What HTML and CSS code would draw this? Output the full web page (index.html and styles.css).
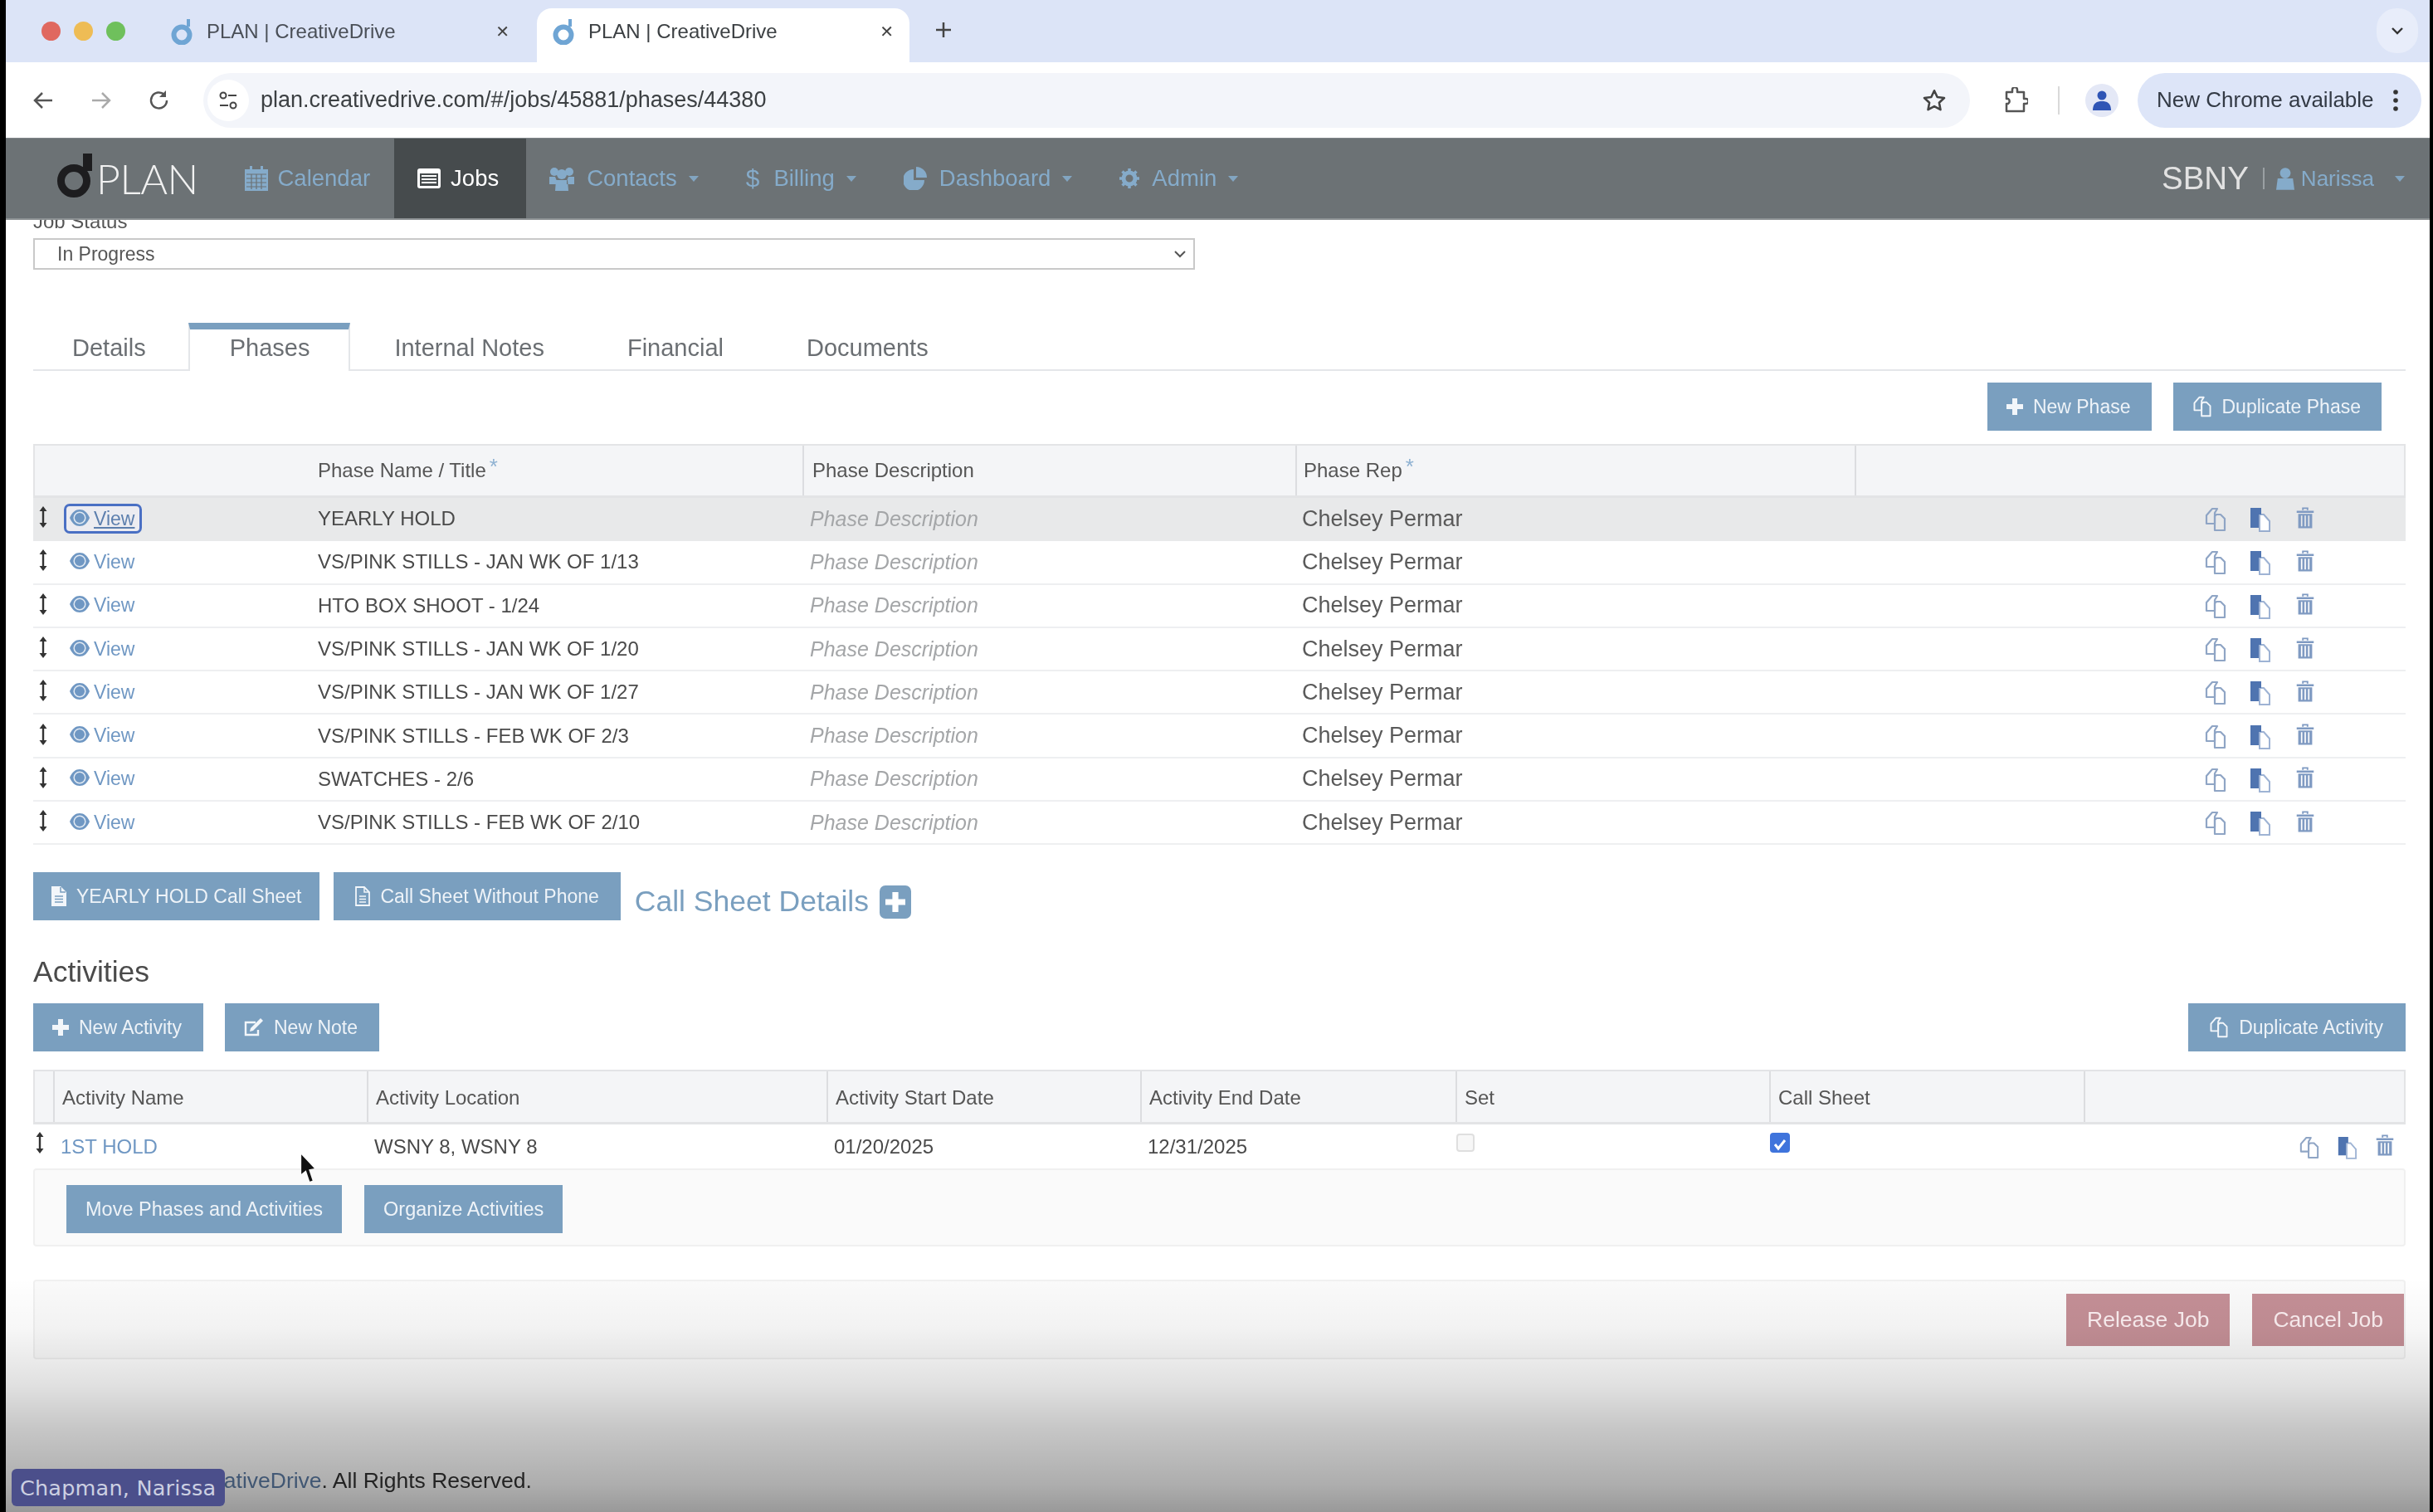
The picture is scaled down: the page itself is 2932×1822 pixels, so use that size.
FILE: index.html
```html
<!DOCTYPE html>
<html lang="en">
<head>
<meta charset="utf-8">
<title>PLAN | CreativeDrive</title>
<link rel="stylesheet" href="styles.css">
</head>
<body>
<svg class="defs" width="0" height="0" aria-hidden="true">
  <symbol id="fav" viewBox="0 0 28 32"><circle cx="13" cy="20" r="9.500" fill="none" stroke="currentColor" stroke-width="6"/><path d="M19 1l4 0 0 9-4 1z" fill="currentColor"/></symbol>
  <symbol id="eye" viewBox="0 0 24 20"><path d="M0 10C3 3 7 0 12 0s9 3 12 10c-3 7-7 10-12 10S3 17 0 10z" fill="currentColor"/><circle cx="12" cy="10" r="6.800" fill="none" stroke="#fff" stroke-width="1.500" opacity=".8"/></symbol>
  <symbol id="drag" viewBox="0 0 10 26"><path d="M5 0l4.500 6H6.200v14h3.300L5 26 .5 20h3.300V6H.5z" fill="currentColor"/></symbol>
  <symbol id="copy" viewBox="0 0 26 30"><path d="M9 2h6l-3 5v13H2V10z" fill="none" stroke="currentColor" stroke-width="2.200" stroke-linejoin="round"/><path d="M14 9h5l5 5v14H12V11z" fill="none" stroke="currentColor" stroke-width="2.200" stroke-linejoin="round"/></symbol>
  <symbol id="paste" viewBox="0 0 26 30"><path d="M2 1h13v8h-3v16H2z" fill="currentColor"/><path d="M13 9h5l7 8v12H13z" fill="#fff" stroke="currentColor" stroke-opacity=".55" stroke-width="2"/></symbol>
  <symbol id="trash" viewBox="0 0 22 30"><path d="M0 6h22v2.600H0zM7 5V1.500h8V5h-2V3.400H9V5z" fill="currentColor"/><path d="M2 10h18v18.500H2zM5.500 12v14h1.800V12zm4.600 0v14h1.800V12zm4.600 0v14h1.800V12z" fill="currentColor" fill-rule="evenodd"/></symbol>
  <symbol id="plus" viewBox="0 0 20 20"><path d="M7 0h6v7h7v6h-7v7H7v-7H0V7h7z" fill="currentColor"/></symbol>
  <symbol id="doc" viewBox="0 0 18 24"><path d="M0 0h11l7 7v17H0z" fill="currentColor"/><path d="M11 1v6h6M4 12h10M4 15.500h10M4 19h10" stroke="#7a9fbf" stroke-width="1.500" fill="none"/></symbol>
  <symbol id="doco" viewBox="0 0 18 24"><path d="M1 1h10l6 6v16H1z" fill="none" stroke="currentColor" stroke-width="1.800"/><path d="M11 1v6h6M5 12h8M5 15.500h8M5 19h8" stroke="currentColor" stroke-width="1.500" fill="none"/></symbol>
  <symbol id="edit" viewBox="0 0 24 24"><path d="M17 15v6H2V6h12" fill="none" stroke="currentColor" stroke-width="2.400"/><path d="M20 1l3 3L11 16l-4 1 1-4z" fill="currentColor"/></symbol>
  <symbol id="cal" viewBox="0 0 28 30"><path d="M0 4h28v26H0z" fill="currentColor"/><path d="M6 0h3v7H6zM19 0h3v7h-3z" fill="currentColor"/><path d="M2 10h24M2 15h24M2 20h24M2 25h24M8 10v18M14 10v18M20 10v18" stroke="#6c7275" stroke-width="1.200"/></symbol>
  <symbol id="list" viewBox="0 0 28 24"><rect width="28" height="24" rx="3" fill="currentColor"/><path d="M3 6h22v15H3z" fill="#464b4d"/><path d="M5 9h18M5 13h18M5 17h18" stroke="#fff" stroke-width="2"/></symbol>
  <symbol id="users" viewBox="0 0 30 30"><circle cx="6" cy="7" r="5" fill="currentColor"/><circle cx="24" cy="7" r="5" fill="currentColor"/><circle cx="15" cy="10" r="6" fill="currentColor"/><path d="M0 13h7l2 5v4H0zM30 13h-7l-2 5v4h9zM8 17h14l1 13H7z" fill="currentColor"/></symbol>
  <symbol id="pie" viewBox="0 0 28 28"><path d="M12 3v13h13a13 13 0 1 1-13-13z" fill="currentColor"/><path d="M15 0a13 13 0 0 1 13 13H15z" fill="currentColor"/></symbol>
  <symbol id="gear" viewBox="0 0 24 24"><circle cx="12" cy="12" r="7" fill="none" stroke="currentColor" stroke-width="5"/><path d="M12 0v24M0 12h24M3.500 3.500l17 17M20.500 3.500l-17 17" stroke="currentColor" stroke-width="3.500" stroke-dasharray="4 16"/></symbol>
  <symbol id="user" viewBox="0 0 24 30"><circle cx="12" cy="8" r="7" fill="currentColor"/><path d="M2 15h20l2 15H0z" fill="currentColor"/></symbol>
</svg>

<div class="window">
  <header class="tabstrip">
    <div class="lights"><i class="light red"></i><i class="light amber"></i><i class="light green"></i></div>
    <div class="btab">
      <svg class="fav"><use href="#fav"/></svg><span class="btab-title">PLAN | CreativeDrive</span><span class="btab-x">✕</span>
    </div>
    <div class="btab active">
      <svg class="fav"><use href="#fav"/></svg><span class="btab-title">PLAN | CreativeDrive</span><span class="btab-x">✕</span>
    </div>
    <svg class="newtab" viewBox="0 0 20 20"><path d="M10 1v18M1 10h18" stroke="#444" stroke-width="2.500"/></svg>
    <div class="tabmenu"><svg viewBox="0 0 16 10" width="16" height="10"><path d="M2 2l6 6 6-6" fill="none" stroke="#333" stroke-width="2.400"/></svg></div>
  </header>

  <div class="toolbar">
    <svg class="tool back" viewBox="0 0 26 26"><path d="M24 13H4M12 4l-9 9 9 9" fill="none" stroke="#555" stroke-width="2.500"/></svg>
    <svg class="tool fwd" viewBox="0 0 26 26"><path d="M2 13h20M14 4l9 9-9 9" fill="none" stroke="#aaa" stroke-width="2.500"/></svg>
    <svg class="tool reload" viewBox="0 0 26 26"><path d="M22 13a9.500 9.500 0 1 1-3-7" fill="none" stroke="#555" stroke-width="2.500"/><path d="M21 1v8h-8z" fill="#555"/></svg>
    <div class="omnibox">
      <span class="tune"><svg viewBox="0 0 24 24" width="24" height="24"><circle cx="6" cy="6" r="3.500" fill="none" stroke="#444" stroke-width="2"/><path d="M12 6h10M2 18h10" stroke="#444" stroke-width="2.200"/><circle cx="18" cy="18" r="3.500" fill="none" stroke="#444" stroke-width="2"/></svg></span>
      <span class="url">plan.creativedrive.com/#/jobs/45881/phases/44380</span>
      <svg class="star" viewBox="0 0 28 28"><path d="M14 3l3.400 7.200 7.800 1-5.700 5.400 1.500 7.800-7-3.800-7 3.800 1.500-7.800-5.700-5.400 7.800-1z" fill="none" stroke="#444" stroke-width="2.400" stroke-linejoin="round"/></svg>
    </div>
    <svg class="ext" viewBox="0 0 30 32"><path d="M4 6h7V3a3 3 0 0 1 6 0v3h8v8h2.500a3 3 0 0 1 0 6H25v9H4v-9h2a3.500 3.500 0 0 0 0-6H4z" fill="none" stroke="#555" stroke-width="2.500" stroke-linejoin="round"/></svg>
    <span class="tooldiv"></span>
    <span class="avatar"><svg viewBox="0 0 24 26" width="24" height="26"><circle cx="12" cy="7" r="5.500" fill="#2f55b5"/><path d="M1 25c0-9 5-11 11-11s11 2 11 11z" fill="#2f55b5"/></svg></span>
    <div class="update"><span>New Chrome available</span><svg viewBox="0 0 6 26" width="6" height="26"><circle cx="3" cy="3" r="2.800" fill="#333"/><circle cx="3" cy="13" r="2.800" fill="#333"/><circle cx="3" cy="23" r="2.800" fill="#333"/></svg></div>
  </div>

  <nav class="navbar">
    <div class="brand"><svg class="brand-mark" viewBox="0 0 44 54"><circle cx="20" cy="33" r="15.500" fill="none" stroke="#1d1d1f" stroke-width="9"/><path d="M31 0h11v21H31z" fill="#1d1d1f"/></svg><span class="brand-name">PLAN</span></div>
    <a class="nav-item"><svg class="nav-ic cal"><use href="#cal"/></svg>Calendar</a>
    <a class="nav-item on"><svg class="nav-ic list"><use href="#list"/></svg>Jobs</a>
    <a class="nav-item"><svg class="nav-ic users"><use href="#users"/></svg>Contacts<i class="caret"></i></a>
    <a class="nav-item"><span class="nav-dollar">$</span>Billing<i class="caret"></i></a>
    <a class="nav-item"><svg class="nav-ic pie"><use href="#pie"/></svg>Dashboard<i class="caret"></i></a>
    <a class="nav-item"><svg class="nav-ic gear"><use href="#gear"/></svg>Admin<i class="caret"></i></a>
    <div class="nav-right"><span class="org">SBNY</span><span class="org-sep"></span><svg class="nav-user"><use href="#user"/></svg><span class="nav-name">Narissa</span><i class="caret far"></i></div>
  </nav>

  <main class="content">
    <div class="status-label">Job Status</div>
    <div class="select"><span>In Progress</span><svg viewBox="0 0 16 10" width="16" height="10"><path d="M2 2l6 6 6-6" fill="none" stroke="#555" stroke-width="2"/></svg></div>

    <div class="tabs">
      <a class="tab first">Details</a>
      <a class="tab active">Phases</a>
      <a class="tab">Internal Notes</a>
      <a class="tab">Financial</a>
      <a class="tab">Documents</a>
    </div>

    <div class="actions-right">
      <a class="btn"><svg class="bi plus"><use href="#plus"/></svg>New Phase</a>
      <a class="btn"><svg class="bi cp"><use href="#copy"/></svg>Duplicate Phase</a>
    </div>

    <div class="ptable">
      <div class="prow phead"><div></div><div class="c-name">Phase Name / Title<sup class="req">*</sup></div><div class="c-desc">Phase Description</div><div class="c-rep">Phase Rep<sup class="req">*</sup></div><div></div></div>

      <div class="prow sel"><div class="c-handle"><svg class="drag"><use href="#drag"/></svg><a class="view focus"><svg class="eye"><use href="#eye"/></svg>View</a></div><div class="pname">YEARLY HOLD</div><div class="pdesc">Phase Description</div><div class="prep">Chelsey Permar</div><div class="pact"><svg class="a cp"><use href="#copy"/></svg><svg class="a ps"><use href="#paste"/></svg><svg class="a tr"><use href="#trash"/></svg></div></div>
      <div class="prow"><div class="c-handle"><svg class="drag"><use href="#drag"/></svg><a class="view"><svg class="eye"><use href="#eye"/></svg>View</a></div><div class="pname">VS/PINK STILLS - JAN WK OF 1/13</div><div class="pdesc">Phase Description</div><div class="prep">Chelsey Permar</div><div class="pact"><svg class="a cp"><use href="#copy"/></svg><svg class="a ps"><use href="#paste"/></svg><svg class="a tr"><use href="#trash"/></svg></div></div>
      <div class="prow"><div class="c-handle"><svg class="drag"><use href="#drag"/></svg><a class="view"><svg class="eye"><use href="#eye"/></svg>View</a></div><div class="pname">HTO BOX SHOOT - 1/24</div><div class="pdesc">Phase Description</div><div class="prep">Chelsey Permar</div><div class="pact"><svg class="a cp"><use href="#copy"/></svg><svg class="a ps"><use href="#paste"/></svg><svg class="a tr"><use href="#trash"/></svg></div></div>
      <div class="prow"><div class="c-handle"><svg class="drag"><use href="#drag"/></svg><a class="view"><svg class="eye"><use href="#eye"/></svg>View</a></div><div class="pname">VS/PINK STILLS - JAN WK OF 1/20</div><div class="pdesc">Phase Description</div><div class="prep">Chelsey Permar</div><div class="pact"><svg class="a cp"><use href="#copy"/></svg><svg class="a ps"><use href="#paste"/></svg><svg class="a tr"><use href="#trash"/></svg></div></div>
      <div class="prow"><div class="c-handle"><svg class="drag"><use href="#drag"/></svg><a class="view"><svg class="eye"><use href="#eye"/></svg>View</a></div><div class="pname">VS/PINK STILLS - JAN WK OF 1/27</div><div class="pdesc">Phase Description</div><div class="prep">Chelsey Permar</div><div class="pact"><svg class="a cp"><use href="#copy"/></svg><svg class="a ps"><use href="#paste"/></svg><svg class="a tr"><use href="#trash"/></svg></div></div>
      <div class="prow"><div class="c-handle"><svg class="drag"><use href="#drag"/></svg><a class="view"><svg class="eye"><use href="#eye"/></svg>View</a></div><div class="pname">VS/PINK STILLS - FEB WK OF 2/3</div><div class="pdesc">Phase Description</div><div class="prep">Chelsey Permar</div><div class="pact"><svg class="a cp"><use href="#copy"/></svg><svg class="a ps"><use href="#paste"/></svg><svg class="a tr"><use href="#trash"/></svg></div></div>
      <div class="prow"><div class="c-handle"><svg class="drag"><use href="#drag"/></svg><a class="view"><svg class="eye"><use href="#eye"/></svg>View</a></div><div class="pname">SWATCHES - 2/6</div><div class="pdesc">Phase Description</div><div class="prep">Chelsey Permar</div><div class="pact"><svg class="a cp"><use href="#copy"/></svg><svg class="a ps"><use href="#paste"/></svg><svg class="a tr"><use href="#trash"/></svg></div></div>
      <div class="prow"><div class="c-handle"><svg class="drag"><use href="#drag"/></svg><a class="view"><svg class="eye"><use href="#eye"/></svg>View</a></div><div class="pname">VS/PINK STILLS - FEB WK OF 2/10</div><div class="pdesc">Phase Description</div><div class="prep">Chelsey Permar</div><div class="pact"><svg class="a cp"><use href="#copy"/></svg><svg class="a ps"><use href="#paste"/></svg><svg class="a tr"><use href="#trash"/></svg></div></div>
    </div>

    <div class="sheet-row">
      <a class="btn sheet-a"><svg class="bi doc"><use href="#doc"/></svg>YEARLY HOLD Call Sheet</a>
      <a class="btn sheet-b"><svg class="bi doc"><use href="#doco"/></svg>Call Sheet Without Phone</a>
      <span class="sheet-title">Call Sheet Details</span>
      <span class="sheet-plus"><svg viewBox="0 0 20 20" width="24" height="24"><path d="M7 0h6v7h7v6h-7v7H7v-7H0V7h7z" fill="#fff"/></svg></span>
    </div>

    <h2 class="h-act">Activities</h2>

    <div class="act-bar">
      <a class="btn"><svg class="bi plus"><use href="#plus"/></svg>New Activity</a>
      <a class="btn"><svg class="bi ed"><use href="#edit"/></svg>New Note</a>
      <a class="btn dup"><svg class="bi cp"><use href="#copy"/></svg>Duplicate Activity</a>
    </div>

    <div class="atable">
      <div class="arow ahead"><div></div><div>Activity Name</div><div>Activity Location</div><div>Activity Start Date</div><div>Activity End Date</div><div>Set</div><div>Call Sheet</div><div></div></div>
      <div class="arow abody">
        <div class="a-handle"><svg class="drag"><use href="#drag"/></svg></div>
        <div><a class="alink">1ST HOLD</a></div>
        <div>WSNY 8, WSNY 8</div>
        <div>01/20/2025</div>
        <div>12/31/2025</div>
        <div><span class="check"></span></div>
        <div><span class="check on"><svg viewBox="0 0 20 20" width="20" height="20"><path d="M4 10l4 5 8-10" fill="none" stroke="#fff" stroke-width="3"/></svg></span></div>
        <div class="aact"><svg class="a cp"><use href="#copy"/></svg><svg class="a ps"><use href="#paste"/></svg><svg class="a tr"><use href="#trash"/></svg></div>
      </div>
    </div>

    <div class="well">
      <a class="btn">Move Phases and Activities</a>
      <a class="btn">Organize Activities</a>
    </div>

    <div class="job-foot">
      <a class="btn danger">Release Job</a>
      <a class="btn danger">Cancel Job</a>
    </div>

    <footer class="copyright">Copyright 2025 <a class="copy-link">CreativeDrive</a>. All Rights Reserved.</footer>
  </main>
</div>

<div class="vignette"></div>
<svg class="cursor" viewBox="0 0 16 32"><path d="M1 1l0 21 5-4 4 12 3-1-4-12 6-1z" fill="#111"/></svg>
<div class="caption">Chapman, Narissa</div>
</body>
</html>
```

FILE: styles.css
```css
* { box-sizing: border-box; }
html, body { margin: 0; padding: 0; }
body {
  width: 2932px; height: 1822px; overflow: hidden; position: relative;
  background: #000; font-family: "Liberation Sans", Arial, sans-serif; color: #4a4a4a;
}
.defs { position: absolute; }
a { color: inherit; text-decoration: none; }

.window {
  margin-left: 7px; width: 2921px; height: 1822px; background: #fff;
  display: flex; flex-direction: column; overflow: hidden; filter: blur(.6px);
}

/* browser tab strip */
.tabstrip { height: 75px; flex: none; background: #dce4f7; display: flex; align-items: flex-start; position: relative; }
.lights { display: flex; gap: 16px; padding: 26px 0 0 43px; width: 191px; flex: none; }
.light { width: 23px; height: 23px; border-radius: 50%; display: block; }
.red { background: #e0685f; }
.amber { background: #eebc55; }
.green { background: #6fc05c; }
.btab { width: 449px; height: 65px; margin-top: 10px; display: flex; align-items: center; padding: 0 33px 10px 8px; flex: none; color: #4a4f57; }
.btab.active { background: #fff; border-radius: 18px 18px 0 0; color: #3c4043; padding: 0 19px 10px 19px; }
.fav { width: 28px; height: 32px; color: #6fa5d4; flex: none; margin-right: 15px; }
.btab-title { font-size: 24px; flex: 1; }
.btab-x { font-size: 20px; color: #444; font-family: "DejaVu Sans", sans-serif; }
.newtab { width: 20px; height: 20px; margin: 26px 0 0 31px; flex: none; }
.tabmenu { margin: 10px 14px 0 auto; width: 50px; height: 54px; border-radius: 24px; background: #e8edfa; display: flex; align-items: center; justify-content: center; }

/* browser toolbar */
.toolbar { height: 91px; flex: none; background: #fff; display: flex; align-items: center; padding: 0 11px 0 32px; }
.tool { width: 26px; height: 26px; flex: none; margin-right: 44px; }
.reload { margin-right: 40px; }
.omnibox { width: 2129px; height: 66px; background: #f3f5fa; border-radius: 33px; display: flex; align-items: center; flex: none; }
.tune { width: 50px; height: 50px; margin-left: 5px; border-radius: 50%; background: #fff; display: flex; align-items: center; justify-content: center; flex: none; }
.url { font-size: 27px; margin-left: 14px; color: #3c4043; flex: 1; }
.star { width: 30px; height: 30px; margin-right: 28px; flex: none; }
.ext { width: 30px; height: 32px; margin-left: 40px; flex: none; }
.tooldiv { width: 2px; height: 34px; background: #d9d9d9; margin-left: 36px; flex: none; }
.avatar { width: 40px; height: 40px; border-radius: 50%; background: #e4e8f6; margin-left: 31px; flex: none; display: flex; align-items: center; justify-content: center; }
.update { margin-left: 23px; height: 66px; width: 342px; flex: none; border-radius: 33px; background: #dde5f8; display: flex; align-items: center; padding: 0 28px 0 23px; justify-content: space-between; font-size: 26px; color: #333a45; }

/* app navbar */
.navbar { height: 99px; flex: none; background: #6c7275; display: flex; align-items: stretch; border-bottom: 2px solid #8d9294; border-top: 1px solid #80868a; font-size: 27.500px; color: #85abca; }
.brand { width: 259px; flex: none; display: flex; align-items: center; padding-left: 62px; }
.brand-mark { width: 44px; height: 54px; margin-top: -6px; flex: none; }
.brand-name { font-family: Lato, "Liberation Sans", sans-serif; font-weight: 300; font-size: 50px; color: #f1f1f1; margin-left: 3px; letter-spacing: -.5px; }
.nav-item { display: flex; align-items: center; padding: 0 28.500px; }
.nav-item.on { background: #464b4d; color: #fff; padding-right: 32.500px; }
.nav-ic { width: 28px; height: 28px; margin-right: 15px; flex: none; }
.nav-ic.cal { height: 30px; margin-right: 12px; }
.nav-ic.list { height: 24px; margin-right: 12px; }
.nav-ic.users { width: 30px; height: 30px; }
.nav-ic.gear { width: 24px; height: 24px; }
.nav-dollar { font-size: 30px; margin-right: 17px; }
.caret { width: 0; height: 0; border-left: 6px solid transparent; border-right: 6px solid transparent; border-top: 7px solid currentColor; margin-left: 14px; opacity: .9; }
.nav-right { margin-left: auto; display: flex; align-items: center; padding-right: 30px; }
.org { font-size: 38.500px; color: #e2e2e2; }
.org-sep { width: 2px; height: 26px; background: #9aa0a3; margin: 0 14px 0 17px; }
.nav-user { width: 22px; height: 30px; margin-right: 8px; }
.nav-name { font-size: 26px; }
.caret.far { margin-left: 25px; }

/* page */
.content { flex: 1; min-height: 0; overflow: hidden; padding: 0 29px 0 33px; display: flex; flex-direction: column; color: #4a4a4a; }
.status-label { font-size: 24px; line-height: 28px; margin-top: -12px; height: 28px; flex: none; color: #555; }
.select { width: 1400px; height: 38px; margin-top: 6px; flex: none; border: 2px solid #c9c9c9; padding: 0 8px 0 27px; display: flex; align-items: center; justify-content: space-between; font-size: 23px; color: #555; }

.tabs { margin-top: 64px; height: 58px; flex: none; display: flex; border-bottom: 2px solid #e4e6e9; font-size: 29px; color: #6b6f73; }
.tab { padding: 2px 47px 0; display: flex; align-items: center; height: 58px; margin-right: 6px; }
.tab.first { margin-right: 4px; }
.tab.active { padding: 0 47px 6px 48px; border: 2px solid #e4e6e9; border-top: 8px solid #7a9fbf; border-bottom: 0; background: #fff; }

.btn { display: inline-flex; align-items: center; height: 58px; padding: 0 25px 0 23px; background: #7a9fbf; color: #eef3f8; font-size: 23px; flex: none; }
.bi { width: 20px; height: 20px; margin-right: 12px; flex: none; color: #f2f6fa; }
.bi.cp { width: 24px; height: 26px; }
.bi.doc { width: 18px; height: 24px; }
.bi.ed { width: 24px; height: 24px; }

.actions-right { margin-top: 14px; padding-right: 29px; display: flex; justify-content: flex-end; gap: 26px; flex: none; }

.ptable { margin-top: 16px; flex: none; }
.prow { display: grid; grid-template-columns: 343px 584px 594px 674px 1fr; height: 52.300px; align-items: center; border-bottom: 2px solid #eeeff1; }
.phead { height: 65px; grid-template-columns: 341px 584px 594px 674px 1fr; background: #f4f5f7; border: 2px solid #e3e4e6; border-bottom-width: 3px; font-size: 24px; color: #555; align-items: stretch; }
.phead > div { display: flex; align-items: center; }
.phead .c-desc { border-left: 2px solid #dcdde0; padding-left: 10px; }
.phead .c-rep { border-left: 2px solid #dcdde0; padding-left: 8px; }
.phead > div:last-child { border-left: 2px solid #dcdde0; }
.req { color: #8fb2d2; font-size: 26px; margin: -10px 0 0 4px; line-height: 1; }
.prow.sel { background: #e8e9ea; border-bottom-color: #e8e9ea; }
.c-handle { display: flex; align-items: center; padding-left: 7px; }
.drag { width: 10px; height: 26px; color: #333; flex: none; margin-top: -4px; }
.view { display: inline-flex; align-items: center; margin-left: 20px; font-size: 23px; color: #6f97c3; padding: 0 6px 0 4px; height: 36px; border: 3px solid transparent; }
.view.focus { color: #5d7fae; text-decoration: underline; border-color: #4a70c4; border-radius: 7px; background: #ececf1; }
.eye { width: 24px; height: 20px; color: #6f97c3; margin-right: 5px; flex: none; margin-top: -3px; }
.pname { font-size: 24px; color: #4a4a4a; }
.pdesc { font-size: 25px; font-style: italic; color: #a4a6a8; padding-left: 9px; }
.prep { font-size: 27px; color: #5a5a5a; padding-left: 8px; }
.pact { display: flex; align-items: center; padding-left: 422px; }
.a { flex: none; }
.a.cp { width: 26px; height: 30px; color: #8fa5c5; margin-top: 2px; }
.a.ps { width: 26px; height: 30px; color: #4f74b0; margin-left: 27px; margin-top: 2px; }
.a.tr { width: 22px; height: 28px; color: #7f9ac2; margin-left: 31px; margin-top: -3px; }

.sheet-row { margin-top: 33px; display: flex; align-items: flex-start; gap: 17px; flex: none; }
.btn.sheet-a { padding: 0 22px; }
.btn.sheet-b { padding: 0 26px; }
.sheet-title { font-size: 35.500px; color: #7a9fbf; margin: 15px 0 0 0; line-height: 40px; }
.sheet-plus { width: 38px; height: 40px; background: #7a9fbf; border-radius: 7px; display: flex; align-items: center; justify-content: center; margin: 16px 0 0 -4px; }

.h-act { font-size: 35.500px; font-weight: 400; color: #4a4a4a; margin: 42px 0 0; line-height: 40px; flex: none; }
.act-bar { margin-top: 18px; display: flex; gap: 26px; flex: none; }
.act-bar .btn { padding-right: 26px; }
.act-bar .btn.dup { margin-left: auto; padding: 0 27px 0 25px; }

.atable { margin-top: 22px; flex: none; }
.arow { display: grid; grid-template-columns: 24px 378px 554px 378px 380px 378px 379px 1fr; align-items: center; }
.ahead { height: 66px; grid-template-columns: 22px 378px 554px 378px 380px 378px 379px 1fr; background: #f4f5f7; border: 2px solid #e3e4e6; border-bottom-width: 3px; font-size: 24px; color: #555; align-items: stretch; }
.ahead > div { display: flex; align-items: center; padding: 2px 0 0 9px; border-left: 2px solid #dcdde0; }
.ahead > div:first-child { border-left: 0; }
.abody { height: 53px; font-size: 24px; color: #4a4a4a; }
.abody > div { padding-left: 9px; }
.a-handle { padding-left: 3px !important; }
.alink { color: #6f97c3; }
.check { display: block; width: 22px; height: 22px; border: 2px solid #dfdfdf; border-radius: 4px; background: #f7f7f7; margin: -10px 0 0 -8px; }
.check.on { width: 24px; height: 24px; background: #3f74dc; border: 0; padding: 2px; margin-left: -8px; }
.aact { display: flex; align-items: center; padding-left: 260px !important; }
.aact .a.cp { width: 24px; height: 28px; }
.aact .a.ps { width: 24px; height: 28px; margin-left: 21px; }
.aact .a.tr { margin-left: 23px; }

.well { height: 94px; flex: none; background: #fafafa; border: 2px solid #f0f0f0; border-radius: 4px; padding: 18px 0 0 38px; display: flex; gap: 27px; align-items: flex-start; }
.well .btn { font-size: 23.500px; padding: 0 23px; }
.job-foot { margin-top: 40px; height: 96px; flex: none; background: #fafafa; border: 2px solid #f0f0f0; border-radius: 4px; padding-top: 15px; display: flex; justify-content: flex-end; gap: 27px; align-items: flex-start; }
.btn.danger { height: 63px; font-size: 26.500px; background: #c48f96; color: #fbeef0; padding: 0 25px; }

.copyright { margin-top: 131px; font-size: 26.500px; line-height: 30px; color: #333; flex: none; }
.copy-link { color: #5f7fa8; }

/* overlays */
.vignette {
  position: absolute; left: 7px; right: 0; bottom: 0; height: 282px; pointer-events: none;
  background: linear-gradient(to bottom, rgba(0,0,0,0) 0, rgba(0,0,0,.03) 60px, rgba(0,0,0,.12) 130px, rgba(0,0,0,.22) 180px, rgba(0,0,0,.32) 250px, rgba(0,0,0,.4) 282px);
}
.cursor { position: absolute; left: 362px; top: 1390px; width: 18px; height: 36px; }
.caption {
  position: absolute; left: 14px; top: 1770px; width: 257px; height: 45px; border-radius: 6px;
  background: #4b4f8b; color: #ccd0e2; font-family: "DejaVu Sans", sans-serif; font-size: 25.500px;
  display: flex; align-items: center; padding-left: 10px; letter-spacing: .2px;
}
```
